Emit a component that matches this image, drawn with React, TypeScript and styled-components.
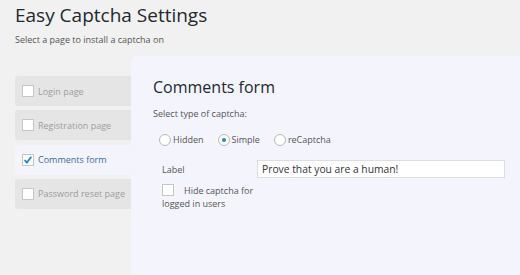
import React, { useState } from 'react';
import styled, { createGlobalStyle } from 'styled-components';

const GlobalStyle = createGlobalStyle`
  html, body {
    margin: 0;
    padding: 0;
    background: #f1f1f1;
  }
  body {
    font-family: "Open Sans", "Liberation Sans", sans-serif;
    color: #444;
    overflow: hidden;
  }
`;

const pages = ['Login page', 'Registration page', 'Comments form', 'Password reset page'];
const captchaTypes = ['Hidden', 'Simple', 'reCaptcha'];

const Check = () => (
  <svg width="12" height="12" viewBox="0 0 12 12">
    <path d="M2.6 6.1 L4.9 8.5 L9.3 2.7" fill="none" stroke="#1e8cbe" strokeWidth="1.9" />
  </svg>
);

export default function App() {
  const [activePage, setActivePage] = useState(2);
  const [captcha, setCaptcha] = useState('Simple');
  const [label, setLabel] = useState('Prove that you are a human!');
  const [hideLogged, setHideLogged] = useState(false);

  return (
    <Page>
      <GlobalStyle />
      <Title>Easy Captcha Settings</Title>
      <Subtitle>Select a page to install a captcha on</Subtitle>
      <Body>
        <Sidebar>
          {pages.map((p, i) => (
            <Tab key={p} $active={i === activePage} onClick={() => setActivePage(i)}>
              <Box>{i === activePage && <Check />}</Box>
              {p}
            </Tab>
          ))}
        </Sidebar>
        <Panel>
          <PanelTitle>{pages[activePage]}</PanelTitle>
          <Caption>Select type of captcha:</Caption>
          <RadioRow>
            {captchaTypes.map((t) => (
              <RadioItem key={t} onClick={() => setCaptcha(t)}>
                <Circle $on={captcha === t} />
                {t}
              </RadioItem>
            ))}
          </RadioRow>
          <FormGrid>
            <FieldLabel>Label</FieldLabel>
            <TextInput value={label} onChange={(e) => setLabel(e.target.value)} />
            <HideLabel onClick={() => setHideLogged(!hideLogged)}>
              <InlineBox>{hideLogged && <Check />}</InlineBox>
              Hide captcha for logged in users
            </HideLabel>
          </FormGrid>
        </Panel>
      </Body>
    </Page>
  );
}

const Page = styled.div`
  height: 275px;
  padding: 2px 0 0 15px;
  box-sizing: border-box;
  display: flex;
  flex-direction: column;
`;

const Title = styled.h1`
  margin: 0;
  font-size: 19px;
  line-height: 26px;
  font-weight: 400;
  color: #23282d;
`;

const Subtitle = styled.div`
  margin-top: 5px;
  font-size: 9px;
  line-height: 13px;
  color: #555;
`;

const Body = styled.div`
  margin-top: 10px;
  flex: 1;
  display: flex;
`;

const Sidebar = styled.div`
  width: 116px;
  padding-top: 20px;
  display: flex;
  flex-direction: column;
  gap: 4.33px;
`;

const Tab = styled.div<{ $active: boolean }>`
  height: 30px;
  display: flex;
  align-items: center;
  gap: 4px;
  padding-left: 7px;
  border-radius: 3px 0 0 3px;
  background: ${(p) => (p.$active ? '#f4f4fd' : '#e5e5e5')};
  color: ${(p) => (p.$active ? '#3a6d9c' : '#9d9d9d')};
  font-size: 9px;
  cursor: pointer;
`;

const Box = styled.span`
  width: 12px;
  height: 12px;
  box-sizing: border-box;
  border: 1px solid #c6c6c6;
  background: #fff;
  display: inline-flex;
  align-items: center;
  justify-content: center;
  flex-shrink: 0;
  & svg {
    margin: -1px;
  }
`;

const InlineBox = styled(Box)`
  vertical-align: -2px;
  margin-right: 10px;
`;

const Panel = styled.div`
  flex: 1;
  background: #f4f4fd;
  border-top-left-radius: 6px;
  padding: 20px 0 0 22px;
`;

const PanelTitle = styled.h2`
  margin: 0;
  font-size: 16px;
  line-height: 22px;
  font-weight: 400;
  color: #23282d;
`;

const Caption = styled.div`
  margin-top: 9px;
  font-size: 9px;
  line-height: 13px;
  color: #555;
`;

const RadioRow = styled.div`
  margin-top: 13px;
  padding-left: 6px;
  display: flex;
  gap: 14px;
  font-size: 9px;
  line-height: 13px;
  color: #555;
`;

const RadioItem = styled.label`
  display: flex;
  align-items: center;
  gap: 2px;
  cursor: pointer;
`;

const Circle = styled.span<{ $on: boolean }>`
  width: 12px;
  height: 12px;
  box-sizing: border-box;
  border: 1px solid #b8b8b8;
  border-radius: 50%;
  background: #fff;
  display: inline-flex;
  align-items: center;
  justify-content: center;
  &::after {
    content: '';
    width: 4px;
    height: 4px;
    border-radius: 50%;
    background: ${(p) => (p.$on ? '#1e8cbe' : 'transparent')};
  }
`;

const FormGrid = styled.div`
  margin-top: 14px;
  padding-left: 9px;
  display: grid;
  grid-template-columns: 95px 248px;
  row-gap: 6px;
  align-items: center;
  font-size: 9px;
  line-height: 13px;
  color: #555;
`;

const FieldLabel = styled.div``;

const TextInput = styled.input`
  height: 18px;
  box-sizing: border-box;
  border: 1px solid #ddd;
  background: #fff;
  padding: 0 4px;
  font-family: "Open Sans", "Liberation Sans", sans-serif;
  font-size: 10.3px;
  color: #333;
  outline: none;
`;

const HideLabel = styled.label`
  display: block;
  cursor: pointer;
`;
